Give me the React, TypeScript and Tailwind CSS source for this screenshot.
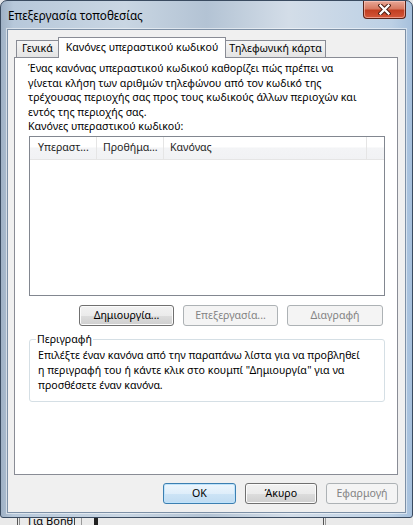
import React from "react";

function Btn({
  children,
  w,
  kind = "normal",
}: {
  children: React.ReactNode;
  w: string;
  kind?: "normal" | "disabled" | "default";
}) {
  const base =
    "flex h-[21px] items-center justify-center rounded-[3px] border text-[10.6px] leading-none";
  if (kind === "disabled")
    return (
      <div className={`${base} ${w} border-[#adb2b5] bg-[#f4f4f4] text-[#838383]`}>
        {children}
      </div>
    );
  if (kind === "default")
    return (
      <div
        className={`${base} ${w} border-[#3c7fb1] bg-[linear-gradient(180deg,#edf6fd_0%,#dfeefa_50%,#cde4f6_51%,#c0dcf2_100%)] text-black shadow-[inset_0_0_0_1px_#bfe3fb]`}
      >
        {children}
      </div>
    );
  return (
    <div
      className={`${base} ${w} border-[#707070] bg-[linear-gradient(180deg,#f2f2f2_0%,#ebebeb_50%,#dddddd_51%,#cfcfcf_100%)] text-black shadow-[inset_0_0_0_1px_#fbfbfb]`}
    >
      {children}
    </div>
  );
}

export default function App() {
  return (
    <div className="relative flex h-[525px] w-[413px] flex-col overflow-hidden bg-[#e4e6e9] font-['Noto_Sans',sans-serif] text-[10.6px] text-black">
      {/* window */}
      <div className="flex h-[518px] shrink-0 flex-col rounded-t-[7px] rounded-b-[3px] border border-[#3a4b60] bg-[linear-gradient(90deg,#9fb1c5_0%,#b7c8da_3%,#c9d6e3_30%,#b3c3d4_50%,#d3dde8_70%,#bcd0e5_95%,#a6c0dc_100%)]">
        {/* title bar */}
        <div className="flex h-[28px] shrink-0 items-start justify-between pl-[7px]">
          <span className="mt-[6px] text-[11.7px] leading-[16px] text-black">
            Επεξεργασία τοποθεσίας
          </span>
          <div className="mr-[6px] flex h-[18px] w-[43px] items-center justify-center rounded-b-[4px] border border-t-0 border-[#5a2318] bg-[linear-gradient(180deg,#e9a897_0%,#d77a62_45%,#c23f22_55%,#d4573a_100%)] shadow-[inset_0_0_0_1px_rgba(255,210,200,0.55)]">
            <svg width="13" height="11" viewBox="0 0 13 11">
              <path d="M2.5 1.5 L10.5 9.5 M10.5 1.5 L2.5 9.5" stroke="#4a1b10" strokeWidth="4.2" strokeLinecap="square" />
              <path d="M2.5 1.5 L10.5 9.5 M10.5 1.5 L2.5 9.5" stroke="#ffffff" strokeWidth="2.3" strokeLinecap="square" />
            </svg>
          </div>
        </div>

        {/* client area */}
        <div className="mx-[6px] flex flex-1 flex-col border border-[#7d90a6] bg-[#f0f0f0] shadow-[0_0_0_1px_rgba(255,255,255,0.5)]">
          {/* tabs */}
          <div className="ml-[8px] flex h-[27px] shrink-0 items-end pt-[7px]">
            <div className="flex h-[17px] w-[43px] items-center justify-center border border-b-0 border-[#898c95] bg-[linear-gradient(180deg,#f5f5f5,#e4e4e4)]">
              Γενικά
            </div>
            <div className="relative z-10 -mb-px -ml-px flex h-[21px] w-[168px] items-start justify-center border border-b-0 border-[#898c95] bg-white pt-[2px]">
              Κανόνες υπεραστικού κωδικού
            </div>
            <div className="-ml-px flex h-[17px] w-[101px] items-center justify-center border border-b-0 border-[#898c95] bg-[linear-gradient(180deg,#f5f5f5,#e4e4e4)]">
              Τηλεφωνική κάρτα
            </div>
          </div>

          {/* tab panel */}
          <div className="ml-[6px] mr-[7px] flex flex-1 flex-col border border-[#898c95] bg-white">
            <p className="pl-[13px] pt-[3px] leading-[14.5px]">
              Ένας κανόνας υπεραστικού κωδικού καθορίζει πώς πρέπει να
              <br />
              γίνεται κλήση των αριθμών τηλεφώνου από τον κωδικό της
              <br />
              τρέχουσας περιοχής σας προς τους κωδικούς άλλων περιοχών και
              <br />
              εντός της περιοχής σας.
            </p>
            <p className="pl-[13px] leading-[14px]">Κανόνες υπεραστικού κωδικού:</p>

            {/* list view */}
            <div className="ml-[14px] mt-[3px] flex h-[160px] w-[356px] flex-col border border-[#828790] bg-white">
              <div className="flex h-[23px] border-b border-[#e5e5e5] bg-[linear-gradient(180deg,#ffffff_0%,#ffffff_45%,#f3f4f6_50%,#f1f2f4_100%)] text-[#1e1e1e]">
                <div className="flex w-[67px] items-center border-r border-[#e5e5e5] pl-[8px]">Υπεραστ...</div>
                <div className="flex w-[67px] items-center border-r border-[#e5e5e5] pl-[6px]">Προθήμα...</div>
                <div className="flex w-[203px] items-center border-r border-[#e5e5e5] pl-[6px]">Κανόνας</div>
                <div className="flex-1" />
              </div>
            </div>

            {/* buttons */}
            <div className="mr-[14px] mt-[9px] flex justify-end gap-[9px]">
              <Btn w="w-[95px]">Δημιουργία...</Btn>
              <Btn w="w-[95px]" kind="disabled">
                Επεξεργασία...
              </Btn>
              <Btn w="w-[96px]" kind="disabled">
                Διαγραφή
              </Btn>
            </div>

            {/* group box */}
            <fieldset className="ml-[14px] mt-[6px] w-[356px] rounded-[3px] border border-[#d5dfe5] pb-[8px] pl-[8px] pt-[2px]">
              <legend className="ml-[-2px] px-[1px] leading-[14px]">Περιγραφή</legend>
              <p className="leading-[15px]">
                Επιλέξτε έναν κανόνα από την παραπάνω λίστα για να προβληθεί
                <br />
                η περιγραφή του ή κάντε κλικ στο κουμπί "Δημιουργία" για να
                <br />
                προσθέσετε έναν κανόνα.
              </p>
            </fieldset>
          </div>

          {/* dialog buttons */}
          <div className="mr-[7px] flex h-[37px] shrink-0 items-start justify-end gap-[9px] pt-[8px]">
            <Btn w="w-[73px]" kind="default">
              OK
            </Btn>
            <Btn w="w-[72px]">Άκυρο</Btn>
            <Btn w="w-[72px]" kind="disabled">
              Εφαρμογή
            </Btn>
          </div>
        </div>
        <div className="h-[4px] shrink-0" />
      </div>

      {/* background behind window */}
      <div className="flex h-[7px] items-start overflow-hidden bg-[#eaeaea]">
        <div className="ml-[17px] h-full w-[1px] bg-[#555]" />
        <div className="ml-[1px] h-full w-[1px] bg-[#888]" />
        <div className="ml-[8px] -mt-[4px] w-[46px] whitespace-nowrap text-[11px] leading-[14px] text-black">Για Βοηθ</div>
        <div className="h-full w-[1px] bg-[#444]" />
        <div className="ml-[6px] h-full w-[1px] bg-[#999]" />
        <div className="ml-[12px] h-full w-[4px] bg-[#222]" />
        <div className="ml-[225px] h-full w-[1px] bg-[#555]" />
        <div className="ml-[1px] h-full w-[1px] bg-[#999]" />
      </div>
    </div>
  );
}
